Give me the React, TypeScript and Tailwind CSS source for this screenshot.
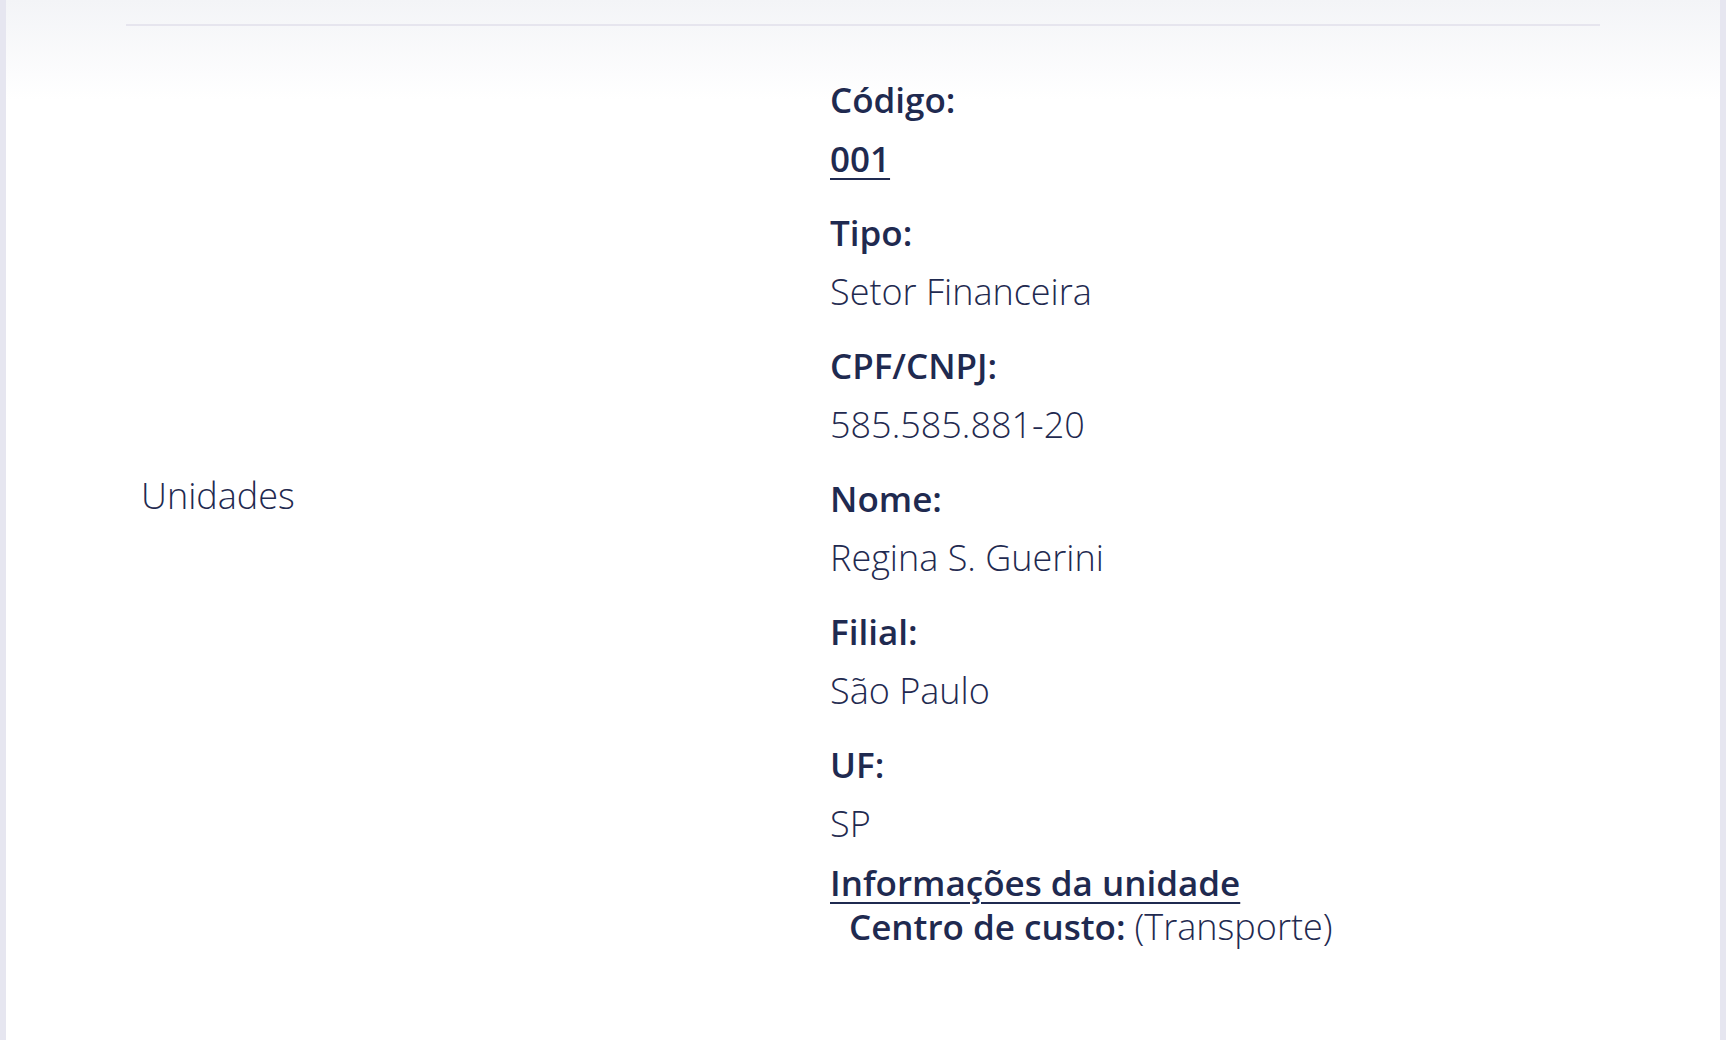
import React from "react";

const font = { fontFamily: "'Open Sans', Lato, sans-serif" };

type Item = { label: string; value: string; link?: boolean };

const items: Item[] = [
  { label: "Código:", value: "001", link: true },
  { label: "Tipo:", value: "Setor Financeira" },
  { label: "CPF/CNPJ:", value: "585.585.881-20" },
  { label: "Nome:", value: "Regina S. Guerini" },
  { label: "Filial:", value: "São Paulo" },
  { label: "UF:", value: "SP" },
];

function Field({ item }: { item: Item }) {
  return (
    <div className="flex flex-col">
      <div className="text-[35px] leading-[44px] font-semibold">{item.label}</div>
      <div
        className={
          item.link
            ? "mt-[15px] text-[35px] leading-[44px] font-semibold underline decoration-2 underline-offset-[6px]"
            : "mt-[15px] text-[36px] leading-[44px] font-light"
        }
      >
        {item.value}
      </div>
    </div>
  );
}

export default function App() {
  return (
    <div className="flex min-h-[1040px] bg-[#e6e6f0] px-[6px] text-[#1f2a50]" style={font}>
      <main className="flex-1 bg-[linear-gradient(to_bottom,#f3f4f7,#ffffff_100px)]">
        <div className="ml-[104px] w-[1490px]">
          <div className="h-[24px]" />
          <div className="ml-[16px] h-[2px] bg-[#e6e5ee]" />
          <div className="flex pt-[52px]">
            <div className="flex w-[720px] items-center pb-[36px] pl-[31px]">
              <span className="text-[36px] leading-[44px] font-light">Unidades</span>
            </div>
            <div className="flex flex-col">
              <div className="flex flex-col gap-[30px]">
                {items.map((it) => (
                  <Field key={it.label} item={it} />
                ))}
              </div>
              <a className="mt-[15px] text-[35px] leading-[44px] font-semibold underline decoration-2 underline-offset-[6px]">
                Informações da unidade
              </a>
              <div className="pl-[19px] text-[35px] leading-[44px]">
                <span className="font-semibold">Centro de custo:</span>{" "}
                <span className="text-[36px] font-light">(Transporte)</span>
              </div>
            </div>
          </div>
        </div>
      </main>
    </div>
  );
}
